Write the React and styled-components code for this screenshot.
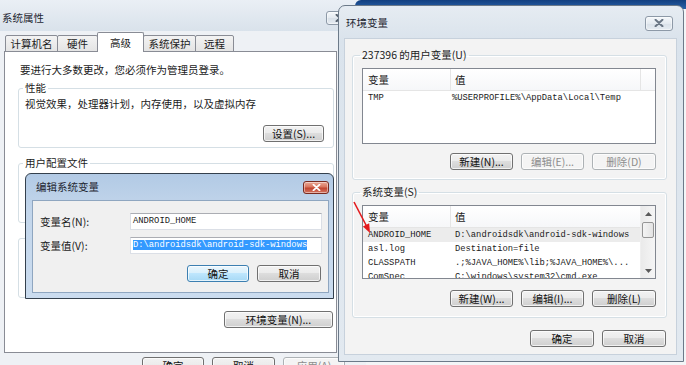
import React from 'react'
import styled, { createGlobalStyle, css } from 'styled-components'

const ui = '"Noto Sans CJK SC", "Noto Sans", sans-serif'
const mono = '"Liberation Mono", "DejaVu Sans Mono", monospace'

const GlobalStyle = createGlobalStyle`
  html, body { margin: 0; padding: 0; }
  body {
    width: 686px;
    height: 365px;
    overflow: hidden;
    font-family: ${ui};
    font-size: 10.5px;
    color: #1b1b1b;
  }
  * { box-sizing: border-box; }
`

const Desktop = styled.main`
  position: relative;
  width: 686px;
  height: 365px;
  overflow: hidden;
  background: #f3f5f7;
`

const Window = styled.section`
  position: absolute;
  left: ${p => p.$x}px;
  top: ${p => p.$y}px;
  width: ${p => p.$w}px;
  height: ${p => p.$h}px;
  display: flex;
  flex-direction: column;
  background: ${p => p.$frame};
  border: ${p => (p.$border ? `1px solid ${p.$border}` : 'none')};
  border-radius: ${p => p.$round || 0}px ${p => p.$round || 0}px 0 0;
  overflow: hidden;
`

const TitleBar = styled.header`
  flex: none;
  display: flex;
  align-items: center;
  justify-content: space-between;
  height: ${p => p.$h}px;
  padding: ${p => p.$pad};
  background: ${p => p.$bg || 'transparent'};
`

const Title = styled.h1`
  margin: 0;
  font-weight: normal;
  font-size: 10.5px;
  line-height: 14px;
  color: #1e2631;
`

const CloseButton = styled.span`
  display: flex;
  align-items: center;
  justify-content: center;
  width: ${p => p.$w}px;
  height: ${p => p.$h}px;
  border: 1px solid ${p => (p.$red ? '#7a2b20' : '#8d99a7')};
  border-radius: 3px;
  background: ${p =>
    p.$red
      ? 'linear-gradient(#eba996, #d9765f 45%, #c2452f 55%, #d27562)'
      : 'linear-gradient(#f5f8fb, #e4eaf0 50%, #d8e0e8 50%, #e6ecf2)'};
  box-shadow: inset 0 0 0 1px rgba(255, 255, 255, 0.45);
  svg { display: block; }
`

const XMark = ({ color, w = 10, h = 8 }) => (
  <svg width={w} height={h} viewBox="0 0 10 8">
    <path d="M1.5 0.8 L8.5 7.2 M8.5 0.8 L1.5 7.2" stroke={color} strokeWidth="2" strokeLinecap="round" fill="none" />
  </svg>
)

/* ---------- buttons ---------- */

const variants = {
  normal: css`
    border-color: #707070;
    background: linear-gradient(#f2f2f2 0%, #ebebeb 49%, #dddddd 50%, #cfcfcf 100%);
    color: #111;
  `,
  disabled: css`
    border-color: #adb2b5;
    background: #f4f4f4;
    color: #8d8d8d;
  `,
  focus: css`
    border-color: #3c7fb1;
    background: linear-gradient(#eaf6fd 0%, #d9f0fc 49%, #bee6fd 50%, #a7d9f5 100%);
    color: #111;
  `,
}

const Button = styled.span`
  flex: none;
  display: flex;
  align-items: center;
  justify-content: center;
  width: ${p => p.$w}px;
  height: 17px;
  border: 1px solid;
  border-radius: 3px;
  box-shadow: inset 0 0 0 1px rgba(255, 255, 255, 0.7);
  font-size: 10.5px;
  line-height: 15px;
  white-space: nowrap;
  ${p => variants[p.$variant || 'normal']}
`

const ButtonRow = styled.div`
  display: flex;
  justify-content: ${p => p.$justify || 'flex-end'};
  gap: ${p => p.$gap || 8}px;
  margin-top: ${p => p.$mt || 0}px;
  padding: ${p => p.$pad || '0'};
`

/* ---------- group boxes ---------- */

const Group = styled.fieldset`
  margin: ${p => p.$mt || 0}px 0 0;
  padding: ${p => p.$pad || 0};
  ${p => p.$h && `height: ${p.$h}px;`}
  flex: none;
  min-width: 0;
  border: 1px solid #d5dfe5;
  border-radius: 3px;
  box-shadow: inset 0 0 0 1px #fff;
`

const Legend = styled.legend`
  margin-left: -2px;
  padding: 0 2px;
  font-size: 10.5px;
  line-height: 14px;
`

const Text = styled.p`
  margin: ${p => p.$m || 0};
  font-size: 10.5px;
  line-height: 14px;
  white-space: nowrap;
`

/* ---------- system properties ---------- */

const SheetBody = styled.div`
  flex: 1;
  display: flex;
  flex-direction: column;
  padding: 1px 29px 0 4px;
`

const TabRow = styled.div`
  display: flex;
  align-items: flex-end;
  height: 20px;
  padding-left: 1px;
`

const Tab = styled.div`
  width: ${p => p.$w}px;
  height: ${p => (p.$active ? 20 : 17)}px;
  margin-left: -1px;
  display: flex;
  align-items: center;
  justify-content: center;
  border: 1px solid #898c95;
  border-bottom: ${p => (p.$active ? 'none' : '1px solid #898c95')};
  border-radius: 2px 2px 0 0;
  background: ${p => (p.$active ? '#fff' : 'linear-gradient(#f3f3f3, #e4e4e4)')};
  font-size: 10.5px;
  line-height: 14px;
  position: relative;
  z-index: ${p => (p.$active ? 2 : 0)};
  &:first-child { margin-left: 0; }
`

const TabPanel = styled.div`
  height: 302px;
  margin-top: -1px;
  border: 1px solid #898c95;
  background: #fff;
  padding: 11px 2px 0 13px;
  display: flex;
  flex-direction: column;
`

/* ---------- edit dialog ---------- */

const DialogClient = styled.div`
  flex: 1;
  margin: 0 4px 5px 6px;
  border: 1px solid #8fa6c0;
  background: #f0f0f0;
  padding: 12px 6px 0 7px;
  display: flex;
  flex-direction: column;
`

const FieldGrid = styled.div`
  display: grid;
  grid-template-columns: 90px 1fr;
  grid-auto-rows: 17px;
  row-gap: 7px;
  align-items: center;
`

const Input = styled.div`
  height: 17px;
  border: 1px solid #dbdfe6;
  border-top-color: #abadb3;
  background: #fff;
  padding-left: 2px;
  font-family: ${mono};
  font-size: 8.8px;
  line-height: 15px;
  white-space: nowrap;
  overflow: hidden;
`

const Selection = styled.span`
  background: #3399ff;
  color: #fff;
`

/* ---------- environment variables ---------- */

const EnvClient = styled.div`
  flex: 1;
  margin: 0 6px 6px 5px;
  border: 1px solid #c7d1dc;
  background: #f3f3f3;
  padding: 9px 9px 0 7px;
  display: flex;
  flex-direction: column;
`

const ListBox = styled.div`
  display: flex;
  height: ${p => p.$h}px;
  margin-top: 6px;
  border: 1px solid #828790;
  background: #fff;
  overflow: hidden;
`

const ListMain = styled.div`
  flex: 1;
  min-width: 0;
  display: flex;
  flex-direction: column;
`

const HeaderRow = styled.div`
  flex: none;
  display: grid;
  grid-template-columns: 88px 190px 1fr;
  height: 22px;
  border-bottom: 1px solid #e5e5e5;
  background: linear-gradient(#ffffff, #f6f7f9);
`

const HeaderCell = styled.div`
  padding-left: ${p => p.$pl}px;
  border-right: 1px solid #e5e5e5;
  font-size: 10.5px;
  line-height: 21px;
  &:last-child { border-right: none; }
`

const Row = styled.div`
  flex: none;
  display: grid;
  grid-template-columns: 88px 1fr;
  height: 14px;
  background: ${p => (p.$selected ? '#ececec' : 'transparent')};
  font-family: ${mono};
  font-size: 8.8px;
  line-height: 14px;
  white-space: nowrap;
`

const Cell = styled.span`
  padding-left: ${p => p.$pl}px;
  overflow: hidden;
`

const ScrollBar = styled.div`
  flex: none;
  width: 15px;
  display: flex;
  flex-direction: column;
  background: linear-gradient(90deg, #eaeaea, #f5f5f5);
  border-left: 1px solid #efefef;
`

const ScrollArrow = styled.div`
  height: 15px;
  display: flex;
  align-items: center;
  justify-content: center;
`

const Thumb = styled.div`
  height: 16px;
  margin: 1px 1px 0;
  border: 1px solid #959595;
  border-radius: 2px;
  background: linear-gradient(90deg, #f3f3f3, #e3e3e3);
`

const Track = styled.div`
  flex: 1;
`

/* ---------- overlays ---------- */

const BackWindowStrip = styled.div`
  position: absolute;
  left: 355px;
  top: 0;
  width: 340px;
  height: 9px;
  border-radius: 6px 0 0 0;
  background: linear-gradient(#123f7f, #2a62a9);
`

const Pointer = styled.svg`
  position: absolute;
  left: 349px;
  top: 198px;
`

const Triangle = ({ down }) => (
  <svg width="7" height="4" viewBox="0 0 7 4">
    <polygon points={down ? '0,0 7,0 3.5,4' : '0,4 7,4 3.5,0'} fill="#5a5a5a" />
  </svg>
)

const tabs = [
  { label: '计算机名', w: 53 },
  { label: '硬件', w: 41 },
  { label: '高级', w: 47, active: true },
  { label: '系统保护', w: 53 },
  { label: '远程', w: 39 },
]

const systemVars = [
  ['ANDROID_HOME', 'D:\\androidsdk\\android-sdk-windows', true],
  ['asl.log', 'Destination=file'],
  ['CLASSPATH', '.;%JAVA_HOME%\\lib;%JAVA_HOME%\\...'],
  ['ComSpec', 'C:\\windows\\system32\\cmd.exe'],
]

export default function App() {
  return (
    <Desktop>
      <GlobalStyle />

      <Window $x={0} $y={0} $w={366} $h={380} $frame="#eef1f5">
        <TitleBar $h={31} $pad="4px 13px 0 2px" $bg="linear-gradient(#eaeff5, #d9e2eb)">
          <Title>系统属性</Title>
          <CloseButton $w={27} $h={14}>
            <XMark color="#56616e" />
          </CloseButton>
        </TitleBar>
        <SheetBody>
          <TabRow>
            {tabs.map(t => (
              <Tab key={t.label} $w={t.w} $active={t.active}>{t.label}</Tab>
            ))}
          </TabRow>
          <TabPanel>
            <Text $m="0 0 0 2px">要进行大多数更改，您必须作为管理员登录。</Text>
            <Group $mt={4} $pad="0 9px 5px 6px">
              <Legend>性能</Legend>
              <Text $m="2px 0 0">视觉效果，处理器计划，内存使用，以及虚拟内存</Text>
              <ButtonRow $mt={14}>
                <Button $w={61}>设置(S)...</Button>
              </ButtonRow>
            </Group>
            <Group $mt={8} $h={67} $pad="0 9px 5px 6px">
              <Legend>用户配置文件</Legend>
            </Group>
            <Group $mt={15} $h={60} />
            <ButtonRow $mt={13} $pad="0 1px 0 0">
              <Button $w={109}>环境变量(N)...</Button>
            </ButtonRow>
          </TabPanel>
          <ButtonRow $mt={4} $justify="flex-start" $pad="0 0 0 138px">
            <Button $w={62}>确定</Button>
            <Button $w={63}>取消</Button>
            <Button $w={62} $variant="disabled">应用(A)</Button>
          </ButtonRow>
        </SheetBody>
      </Window>

      <Window
        $x={25}
        $y={173}
        $w={309}
        $h={126}
        $frame="linear-gradient(#b2cae5, #c3d6eb 30%, #cbdcef)"
        $border="#34404d"
        $round={6}
      >
        <TitleBar $h={26} $pad="0 4px 0 10px">
          <Title>编辑系统变量</Title>
          <CloseButton $red $w={26} $h={13}>
            <XMark color="#fff" w={9} h={7} />
          </CloseButton>
        </TitleBar>
        <DialogClient>
          <FieldGrid>
            <Text>变量名(N):</Text>
            <Input>ANDROID_HOME</Input>
            <Text>变量值(V):</Text>
            <Input>
              <Selection>{'D:\\androidsdk\\android-sdk-windows'}</Selection>
            </Input>
          </FieldGrid>
          <ButtonRow $mt={11} $pad="0 1px 0 0">
            <Button $w={62} $variant="focus">确定</Button>
            <Button $w={64}>取消</Button>
          </ButtonRow>
        </DialogClient>
      </Window>

      <BackWindowStrip />

      <Window
        $x={338}
        $y={5}
        $w={346}
        $h={357}
        $frame="linear-gradient(#e6ecf2, #dae3ec 34px, #e2e9f0)"
        $border="#6c7a89"
        $round={7}
      >
        <TitleBar $h={32} $pad="2px 10px 0 7px">
          <Title>环境变量</Title>
          <CloseButton $w={28} $h={15}>
            <XMark color="#6a7684" />
          </CloseButton>
        </TitleBar>
        <EnvClient>
          <Group $pad="0 10px 9px 9px">
            <Legend>237396 的用户变量(U)</Legend>
            <ListBox $h={76}>
              <ListMain>
                <HeaderRow>
                  <HeaderCell $pl={5}>变量</HeaderCell>
                  <HeaderCell $pl={4}>值</HeaderCell>
                  <HeaderCell $pl={0} />
                </HeaderRow>
                <Row>
                  <Cell $pl={5}>TMP</Cell>
                  <Cell $pl={1}>{'%USERPROFILE%\\AppData\\Local\\Temp'}</Cell>
                </Row>
              </ListMain>
            </ListBox>
            <ButtonRow $mt={9}>
              <Button $w={63}>新建(N)...</Button>
              <Button $w={63} $variant="disabled">编辑(E)...</Button>
              <Button $w={64} $variant="disabled">删除(D)</Button>
            </ButtonRow>
          </Group>

          <Group $mt={5} $pad="0 10px 10px 9px">
            <Legend>系统变量(S)</Legend>
            <ListBox $h={74}>
              <ListMain>
                <HeaderRow>
                  <HeaderCell $pl={5}>变量</HeaderCell>
                  <HeaderCell $pl={4}>值</HeaderCell>
                </HeaderRow>
                {systemVars.map(([name, value, selected]) => (
                  <Row key={name} $selected={selected}>
                    <Cell $pl={5}>{name}</Cell>
                    <Cell $pl={4}>{value}</Cell>
                  </Row>
                ))}
              </ListMain>
              <ScrollBar>
                <ScrollArrow><Triangle /></ScrollArrow>
                <Thumb />
                <Track />
                <ScrollArrow><Triangle down /></ScrollArrow>
              </ScrollBar>
            </ListBox>
            <ButtonRow $mt={11}>
              <Button $w={63}>新建(W)...</Button>
              <Button $w={63}>编辑(I)...</Button>
              <Button $w={64}>删除(L)</Button>
            </ButtonRow>
          </Group>

          <ButtonRow $mt={12} $pad="0 1px 0 0">
            <Button $w={64}>确定</Button>
            <Button $w={64}>取消</Button>
          </ButtonRow>
        </EnvClient>
      </Window>

      <Pointer width="26" height="40" viewBox="0 0 26 40">
        <line x1="5" y1="4" x2="17.5" y2="28" stroke="#e3191c" strokeWidth="1.6" />
        <polygon points="21,35 20.2,25.2 13.9,28.6" fill="#e3191c" />
      </Pointer>
    </Desktop>
  )
}
